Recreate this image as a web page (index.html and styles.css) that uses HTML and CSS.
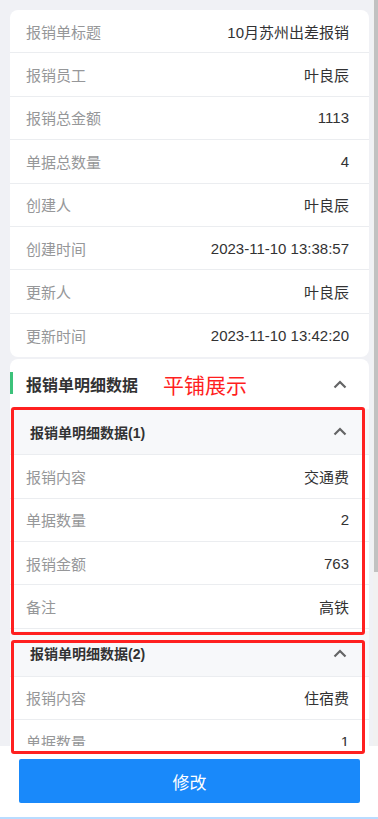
FILE: index.html
```html
<!DOCTYPE html>
<html lang="zh-CN">
<head>
    <meta charset="UTF-8">
    <meta name="viewport" content="width=device-width, initial-scale=1.0">
    <title>报销单详情</title>
    <link rel="stylesheet" href="styles.css">
</head>
<body>
    <div class="page">
        <div class="scroll-area">
            <div class="content">
                <div class="card">
                    <div class="cell"><span class="label">报销单标题</span><span class="value">10月苏州出差报销</span></div>
                    <div class="cell"><span class="label">报销员工</span><span class="value">叶良辰</span></div>
                    <div class="cell"><span class="label">报销总金额</span><span class="value">1113</span></div>
                    <div class="cell"><span class="label">单据总数量</span><span class="value">4</span></div>
                    <div class="cell"><span class="label">创建人</span><span class="value">叶良辰</span></div>
                    <div class="cell"><span class="label">创建时间</span><span class="value">2023-11-10 13:38:57</span></div>
                    <div class="cell"><span class="label">更新人</span><span class="value">叶良辰</span></div>
                    <div class="cell"><span class="label">更新时间</span><span class="value">2023-11-10 13:42:20</span></div>
                </div>

                <div class="card detail-card">
                    <div class="section-head">
                        <span class="section-title">报销单明细数据</span>
                        <span class="note">平铺展示</span>
                        <svg class="arrow" width="14" height="9" viewBox="0 0 14 9"><path d="M1.5 7.5 L7 2 L12.5 7.5" fill="none" stroke="#646566" stroke-width="2.2"/></svg>
                    </div>

                    <div class="group">
                        <div class="group-head">
                            <span>报销单明细数据(1)</span>
                            <svg class="arrow" width="14" height="9" viewBox="0 0 14 9"><path d="M1.5 7.5 L7 2 L12.5 7.5" fill="none" stroke="#646566" stroke-width="2.2"/></svg>
                        </div>
                        <div class="cell"><span class="label">报销内容</span><span class="value">交通费</span></div>
                        <div class="cell"><span class="label">单据数量</span><span class="value">2</span></div>
                        <div class="cell"><span class="label">报销金额</span><span class="value">763</span></div>
                        <div class="cell"><span class="label">备注</span><span class="value">高铁</span></div>
                    </div>

                    <div class="group group-next">
                        <div class="group-head">
                            <span>报销单明细数据(2)</span>
                            <svg class="arrow" width="14" height="9" viewBox="0 0 14 9"><path d="M1.5 7.5 L7 2 L12.5 7.5" fill="none" stroke="#646566" stroke-width="2.2"/></svg>
                        </div>
                        <div class="cell"><span class="label">报销内容</span><span class="value">住宿费</span></div>
                        <div class="cell"><span class="label">单据数量</span><span class="value">1</span></div>
                    </div>
                </div>
            </div>
            <div class="scrollbar"><div class="thumb"></div></div>
        </div>

        <div class="footer">
            <button type="button">修改</button>
        </div>

        <!-- red annotation frames -->
        <div class="mark mark-1"></div>
        <div class="mark mark-2"></div>
    </div>
</body>
</html>
```

FILE: styles.css
```css
* {
    box-sizing: border-box;
}
body {
    margin: 0;
    font-family: "Liberation Sans", "Noto Sans CJK SC", sans-serif;
    font-size: 15px;
    color: #323233;
}
.page {
    position: relative;
    width: 378px;
    height: 819px;
    display: flex;
    flex-direction: column;
    background: #fff;
}
.scroll-area {
    display: flex;
    height: 746px;
    overflow: hidden;
    background: #f0f1f5;
}
.content {
    flex: 1;
    padding: 10px 4px 0 10px;
}
.scrollbar {
    width: 5px;
    background: #f1f1f1;
}
.thumb {
    width: 4px;
    height: 572px;
    margin-left: 1px;
    background: #c1c1c1;
}
.card {
    background: #fff;
    border-radius: 8px;
    overflow: hidden;
}
.detail-card {
    margin-top: 2px;
    border-radius: 8px 8px 0 0;
}
.cell {
    display: flex;
    justify-content: space-between;
    align-items: center;
    height: 43.4px;
    padding: 0 20px 0 16px;
    border-bottom: 1px solid #ebedf0;
}
.card > .cell:last-child {
    border-bottom: none;
}
.label {
    color: #969799;
}
.value {
    color: #323233;
}
.section-head {
    position: relative;
    display: flex;
    align-items: center;
    height: 50px;
    padding: 0 22px 0 16px;
}
.section-head::before {
    content: "";
    position: absolute;
    left: 0;
    top: 13px;
    width: 3px;
    height: 22px;
    background: #3cc27a;
}
.section-title {
    font-size: 16px;
    font-weight: 600;
    color: #323233;
}
.note {
    margin-left: 25px;
    font-size: 21px;
    color: #ff1f1f;
}
.arrow {
    margin-left: auto;
}
.group-head {
    display: flex;
    align-items: center;
    height: 46px;
    padding: 0 22px 0 20px;
    background: #f7f8fa;
    border-bottom: 1px solid #ebedf0;
    font-size: 14px;
    font-weight: bold;
    color: #323233;
}
.group-next {
    margin-top: 2px;
}
.footer {
    height: 73px;
    padding: 13px 18px 0 19px;
    border-bottom: 2px solid #b9dcff;
}
.footer button {
    display: block;
    width: 100%;
    height: 44px;
    border: none;
    border-radius: 2px;
    background: #1989fa;
    color: #fff;
    font-family: "Liberation Sans", "Noto Sans CJK SC", sans-serif;
    font-size: 17px;
}
.mark {
    position: absolute;
    left: 11px;
    width: 354px;
    border: 3px solid #ff2020;
    border-radius: 3px;
}
.mark-1 {
    top: 407px;
    height: 228px;
}
.mark-2 {
    top: 640px;
    height: 114px;
}
```
